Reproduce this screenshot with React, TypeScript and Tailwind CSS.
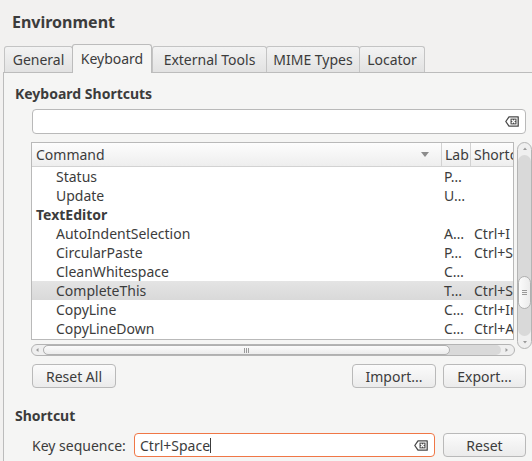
import React from 'react';

const FONT = { fontFamily: '"Noto Sans", "Open Sans", sans-serif' };

function ClearIcon() {
  return (
    <svg width="14" height="11" viewBox="0 0 14 11" className="shrink-0">
      <path d="M4 0.8 H13.2 V10.2 H4 L0.8 5.5 Z" fill="none" stroke="#4a4a4a" strokeWidth="1.3" strokeLinejoin="round" />
      <rect x="5.5" y="2.6" width="6" height="5.8" fill="#4a4a4a" />
      <path d="M6.7 3.8 L10.3 7.2 M10.3 3.8 L6.7 7.2" stroke="#ffffff" strokeWidth="1.2" />
    </svg>
  );
}

const tabs = ['General', 'Keyboard', 'External Tools', 'MIME Types', 'Locator'];
const tabWidths = [69, 80, 115, 94, 66];

type Row = { name: string; label?: string; shortcut?: string; group?: boolean; selected?: boolean };

const rows: Row[] = [
  { name: 'Status', label: 'P…' },
  { name: 'Update', label: 'U…' },
  { name: 'TextEditor', group: true },
  { name: 'AutoIndentSelection', label: 'A…', shortcut: 'Ctrl+I' },
  { name: 'CircularPaste', label: 'P…', shortcut: 'Ctrl+Shift+V' },
  { name: 'CleanWhitespace', label: 'C…' },
  { name: 'CompleteThis', label: 'T…', shortcut: 'Ctrl+Space', selected: true },
  { name: 'CopyLine', label: 'C…', shortcut: 'Ctrl+Ins' },
  { name: 'CopyLineDown', label: 'C…', shortcut: 'Ctrl+Alt+Down' },
];

function Button({ children, className = '' }: { children: React.ReactNode; className?: string }) {
  return (
    <div
      className={`h-[24px] flex items-center justify-center rounded-[4px] border border-[#b9b9b9] bg-gradient-to-b from-[#fbfbfb] to-[#ebebeb] text-[14px] text-[#3c3c3c] ${className}`}
    >
      {children}
    </div>
  );
}

function Grip({ vertical }: { vertical?: boolean }) {
  return vertical ? (
    <div className="flex flex-col gap-[1px]">
      <div className="w-[5px] h-px bg-[#9a9a9a]" />
      <div className="w-[5px] h-px bg-[#9a9a9a]" />
      <div className="w-[5px] h-px bg-[#9a9a9a]" />
    </div>
  ) : (
    <div className="flex gap-[1px]">
      <div className="h-[5px] w-px bg-[#9a9a9a]" />
      <div className="h-[5px] w-px bg-[#9a9a9a]" />
      <div className="h-[5px] w-px bg-[#9a9a9a]" />
    </div>
  );
}

export default function App() {
  return (
    <div className="w-[532px] h-[461px] overflow-hidden bg-[#f2f1f0] text-[#3c3c3c]" style={FONT}>
      {/* title */}
      <div className="h-[43px] pl-[12px] pt-[10px] text-[16px] font-bold leading-[24px] text-[#3c3c3c]">Environment</div>

      {/* tabs */}
      <div className="flex items-end h-[29px] pl-[4px]">
        {tabs.map((t, i) => {
          const active = i === 1;
          return (
            <div
              key={t}
              style={{ width: tabWidths[i] }}
              className={
                active
                  ? 'h-[29px] -mb-px z-10 flex items-center justify-center rounded-t-[3px] border border-b-0 border-[#bcbcbc] bg-[#f5f5f4] text-[14px] pb-[2px]'
                  : 'h-[26px] flex items-center justify-center rounded-t-[3px] border border-b-0 border-[#c4c4c4] bg-gradient-to-b from-[#f3f3f3] to-[#e2e2e2] text-[14px] -mr-px whitespace-nowrap'
              }
            >
              {t}
            </div>
          );
        })}
      </div>

      {/* pane */}
      <div className="ml-[3px] w-[540px] h-[390px] border-l border-t border-[#bcbcbc] bg-[#f5f5f4] pl-[27px]">
        <div className="-ml-[16px] pt-[11px] h-[36px] text-[14px] font-bold leading-[20px]">Keyboard Shortcuts</div>

        {/* filter */}
        <div className="ml-[1px] w-[494px] h-[25px] rounded-[4px] border border-[#b9b9b9] bg-white flex items-center justify-end pr-[6px]">
          <ClearIcon />
        </div>

        {/* tree + vscroll */}
        <div className="mt-[8px] flex gap-[2px]">
          <div>
            <div className="w-[483px] h-[198px] border border-[#b9b9b9] bg-white overflow-hidden">
              <div className="flex h-[24px] border-b border-[#d2d2d2] bg-gradient-to-b from-[#fdfdfd] to-[#eeeeee] text-[14px]">
                <div className="w-[410px] flex items-center justify-between pl-[4px] pr-[12px] border-r border-[#d2d2d2]">
                  <span>Command</span>
                  <svg width="8" height="5" viewBox="0 0 8 5">
                    <path d="M0 0 H8 L4 5 Z" fill="#8c8c8c" />
                  </svg>
                </div>
                <div className="w-[29px] flex items-center pl-[3px] border-r border-[#d2d2d2] overflow-hidden whitespace-nowrap">Lab</div>
                <div className="flex-1 flex items-center pl-[3px] overflow-hidden whitespace-nowrap">Shortcut</div>
              </div>
              {rows.map((r) => (
                <div
                  key={r.name}
                  className={`flex h-[19px] items-center text-[14px] whitespace-nowrap ${
                    r.selected ? 'bg-gradient-to-b from-[#e4e4e4] to-[#d9d9d9]' : ''
                  }`}
                >
                  <div className={`w-[410px] overflow-hidden ${r.group ? 'pl-[4px] font-bold' : 'pl-[24px]'}`}>{r.name}</div>
                  <div className="w-[29px] pl-[2px] overflow-hidden">{r.label}</div>
                  <div className="flex-1 pl-[3px] overflow-hidden">{r.shortcut}</div>
                </div>
              ))}
            </div>

            {/* horizontal scrollbar */}
            <div className="mt-[4px] w-[484px] h-[12px] rounded-full border border-[#b4b4b4] bg-[#efefef] flex items-center">
              <svg width="11" height="10" viewBox="0 0 11 10" className="shrink-0">
                <path d="M6.5 3 L4 5 L6.5 7 Z" fill="#9a9a9a" />
              </svg>
              <div className="flex-1 h-[10px] rounded-full bg-[#d9d9d9] flex items-center mr-[12px]">
                <div className="w-[407px] h-[10px] rounded-full border border-[#b0b0b0] bg-gradient-to-b from-[#fbfbfb] to-[#ececec] flex items-center justify-center">
                  <Grip />
                </div>
              </div>
              <svg width="10" height="10" viewBox="0 0 10 10" className="shrink-0 -ml-[11px] mr-[2px]">
                <path d="M3.5 3 L6 5 L3.5 7 Z" fill="#9a9a9a" />
              </svg>
            </div>
          </div>

          {/* vertical scrollbar */}
          <div className="w-[15px] h-[207px] rounded-full border border-[#b4b4b4] bg-[#efefef] flex flex-col items-center">
            <svg width="10" height="12" viewBox="0 0 10 12" className="shrink-0">
              <path d="M3 7 L5 4.5 L7 7 Z" fill="#9a9a9a" />
            </svg>
            <div className="flex-1 w-[13px] rounded-full bg-[#d9d9d9] flex flex-col">
              <div className="h-[121px]" />
              <div className="h-[33px] rounded-full border border-[#b0b0b0] bg-gradient-to-r from-[#fbfbfb] to-[#ececec] flex items-center justify-center">
                <Grip vertical />
              </div>
            </div>
            <svg width="10" height="12" viewBox="0 0 10 12" className="shrink-0">
              <path d="M3 5 L5 7.5 L7 5 Z" fill="#9a9a9a" />
            </svg>
          </div>
        </div>

        {/* buttons */}
        <div className="mt-[8px] w-[495px] flex items-center">
          <Button className="w-[84px] ml-[1px]">Reset All</Button>
          <div className="flex-1" />
          <Button className="w-[84px]">Import...</Button>
          <Button className="w-[83px] ml-[7px]">Export...</Button>
        </div>

        <div className="-ml-[16px] mt-[18px] h-[20px] text-[14px] font-bold leading-[20px]">Shortcut</div>

        {/* key sequence */}
        <div className="mt-[7px] w-[495px] flex items-center">
          <div className="w-[103px] pl-[1px] text-[14px]">Key sequence:</div>
          <div className="w-[301px] h-[24px] rounded-[4px] border border-[#f07746] bg-white flex items-center pl-[5px] pr-[6px] text-[14px]">
            <span>Ctrl+Space</span>
            <span className="w-px h-[15px] bg-[#3c3c3c]" />
            <div className="flex-1" />
            <ClearIcon />
          </div>
          <div className="flex-1" />
          <Button className="w-[83px]">Reset</Button>
        </div>
      </div>
    </div>
  );
}
